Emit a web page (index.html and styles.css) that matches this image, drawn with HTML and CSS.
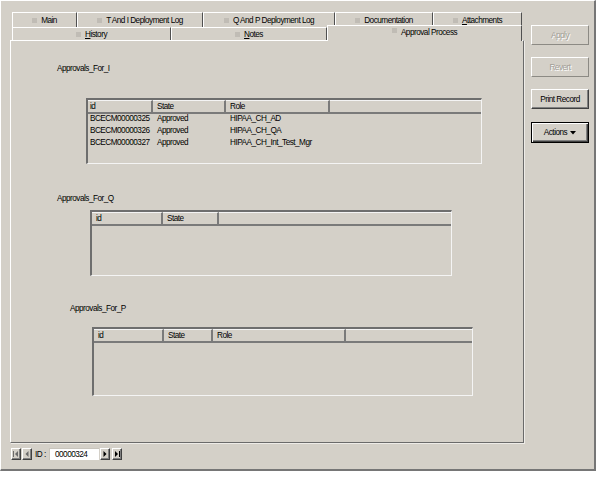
FILE: index.html
```html
<!DOCTYPE html>
<html>
<head>
<meta charset="utf-8">
<link rel="stylesheet" href="styles.css">
</head>
<body>
<div class="window">
  <div class="main">
    <div class="tabrow row1">
      <div class="tab t-main"><span class="sq"></span>Main</div>
      <div class="tab t-ti"><span class="sq"></span>T And I Deployment Log</div>
      <div class="tab t-qp"><span class="sq"></span>Q And P Deployment Log</div>
      <div class="tab t-doc"><span class="sq"></span>Documentation</div>
      <div class="tab t-att"><span class="sq"></span><span><u>A</u>ttachments</span></div>
    </div>
    <div class="tabrow row2">
      <div class="tab t-hist"><span class="sq"></span><span><u>H</u>istory</span></div>
      <div class="tab t-notes"><span class="sq"></span><span><u>N</u>otes</span></div>
      <div class="tab t-appr sel"><span class="sq"></span>Approval Process</div>
    </div>
    <div class="panel">
      <div class="label lab-i">Approvals_For_I</div>
      <div class="lv lv-i">
        <div class="lv-row lv-head">
          <div class="hc i-c1">id</div>
          <div class="hc i-c2">State</div>
          <div class="hc i-c3">Role</div>
          <div class="hc fill"></div>
        </div>
        <div class="lv-row">
          <div class="dc i-c1">BCECM00000325</div>
          <div class="dc i-c2">Approved</div>
          <div class="dc i-c3">HIPAA_CH_AD</div>
        </div>
        <div class="lv-row">
          <div class="dc i-c1">BCECM00000326</div>
          <div class="dc i-c2">Approved</div>
          <div class="dc i-c3">HIPAA_CH_QA</div>
        </div>
        <div class="lv-row">
          <div class="dc i-c1">BCECM00000327</div>
          <div class="dc i-c2">Approved</div>
          <div class="dc i-c3">HIPAA_CH_Int_Test_Mgr</div>
        </div>
      </div>

      <div class="label lab-q">Approvals_For_Q</div>
      <div class="lv lv-q">
        <div class="lv-row lv-head">
          <div class="hc q-c1">id</div>
          <div class="hc q-c2">State</div>
          <div class="hc fill"></div>
        </div>
      </div>

      <div class="label lab-p">Approvals_For_P</div>
      <div class="lv lv-p">
        <div class="lv-row lv-head">
          <div class="hc p-c1">id</div>
          <div class="hc p-c2">State</div>
          <div class="hc p-c3">Role</div>
          <div class="hc fill"></div>
        </div>
      </div>
    </div>
    <div class="nav">
      <div class="nbtn dim"><svg width="8" height="8" viewBox="0 0 8 8"><rect x="1" y="1" width="1" height="6"/><path d="M6 1 L3 4 L6 7 Z"/></svg></div>
      <div class="nbtn dim"><svg width="8" height="8" viewBox="0 0 8 8"><path d="M5.5 1 L2.5 4 L5.5 7 Z"/></svg></div>
      <div class="idlab">ID :</div>
      <div class="idbox">00000324</div>
      <div class="nbtn"><svg width="8" height="8" viewBox="0 0 8 8"><path d="M2.5 1 L5.5 4 L2.5 7 Z"/></svg></div>
      <div class="nbtn nb-last"><svg width="8" height="8" viewBox="0 0 8 8"><path d="M2 1 L5 4 L2 7 Z"/><rect x="6" y="1" width="1" height="6"/></svg></div>
    </div>
  </div>
  <div class="side">
    <div class="btn dis">Apply</div>
    <div class="btn dis">Revert</div>
    <div class="btn">Print Record</div>
    <div class="btn def">Actions <svg class="arrow" width="6" height="4" viewBox="0 0 6 4"><path d="M0 0 H6 L3 3.5 Z"/></svg></div>
  </div>
</div>
</body>
</html>
```

FILE: styles.css
```css
* { box-sizing: border-box; }

body {
  margin: 0;
  background: #ffffff;
  font-family: "Liberation Sans", Arial, sans-serif;
  font-size: 8.2px;
  letter-spacing: -0.5px;
  color: #000;
}

.window {
  width: 596px;
  height: 471px;
  background: #d4d0c8;
  border-top: 1px solid #fff;
  border-left: 1px solid #fff;
  border-right: 2px solid #767676;
  border-bottom: 2px solid #767676;
  display: flex;
  align-items: flex-start;
}

.main {
  width: 514px;
  margin: 11px 0 0 9px;
  display: flex;
  flex-direction: column;
}

.tabrow {
  display: flex;
  margin-left: 2px;
  width: 510px;
}

.tab {
  display: flex;
  align-items: center;
  justify-content: center;
  gap: 4px;
  background: #d4d0c8;
  border-top: 1px solid #fff;
  border-left: 1px solid #fff;
  border-right: 1px solid #505050;
  white-space: nowrap;
}

.tab .sq {
  width: 5px;
  height: 5px;
  background: #c0bcb5;
}

.tab u { text-decoration: underline; }

.row1 .tab { height: 15px; }
.row2 .tab { height: 13px; }

.t-main { width: 65px; }
.t-ti { width: 126px; }
.t-qp { width: 132px; }
.t-doc { width: 98px; }
.t-att { width: 89px; }
.t-hist { width: 159px; }
.t-notes { width: 156px; }
.t-appr { width: 195px; }

.row2 .tab.sel {
  height: 16px;
  margin-top: -2px;
  margin-bottom: -1px;
  position: relative;
  z-index: 2;
  align-items: flex-start;
  padding-top: 2px;
}

.panel {
  height: 403px;
  border-top: 1px solid #fff;
  border-left: 1px solid #fff;
  border-right: 1px solid #6a6a6a;
  border-bottom: 1px solid #6a6a6a;
  box-shadow: 1px 1px 0 #eeece8;
  display: flex;
  flex-direction: column;
  align-items: flex-start;
}

.label {
  height: 10px;
  line-height: 10px;
  white-space: nowrap;
}

.lab-i { margin: 23px 0 0 46px; }
.lab-q { margin: 30px 0 0 46px; }
.lab-p { margin: 28px 0 0 59px; }

.lv {
  border-top: 2px solid #6e6e6e;
  border-left: 2px solid #6e6e6e;
  border-right: 1px solid #f4f4f4;
  border-bottom: 1px solid #f4f4f4;
  background: #d4d0c8;
}

.lv-i { width: 396px; height: 66px; margin: 24px 0 0 75px; }
.lv-q { width: 362px; height: 66px; margin: 6px 0 0 79px; }
.lv-p { width: 381px; height: 69px; margin: 13px 0 0 81px; }

.lv-row {
  display: flex;
  height: 12px;
  line-height: 12px;
}

.lv-head {
  height: 14px;
  line-height: 12px;
  margin-bottom: -1px;
}

.hc {
  height: 14px;
  padding-left: 4px;
  border-top: 1px solid #f4f4f4;
  border-right: 2px solid #7a7a7a;
  border-bottom: 2px solid #7a7a7a;
  white-space: nowrap;
}

.hc.fill {
  flex: 1;
  border-right: none;
}

.dc {
  padding-left: 4px;
  white-space: nowrap;
}

.lv-row .i-c1 { width: 65px; padding-left: 2px; }
.i-c2 { width: 73px; }
.i-c3 { width: 104px; }

.q-c1 { width: 71px; }
.q-c2 { width: 56px; }

.p-c1 { width: 70px; }
.p-c2 { width: 49px; }
.p-c3 { width: 133px; }

.nav {
  display: flex;
  align-items: center;
  height: 12px;
  margin: 5px 0 0 1px;
}

.nbtn {
  width: 10px;
  height: 12px;
  margin-right: 1px;
  border-top: 1px solid #fff;
  border-left: 1px solid #fff;
  border-right: 1px solid #404040;
  border-bottom: 1px solid #404040;
  box-shadow: inset -1px -1px 0 #808080;
  display: flex;
  align-items: center;
  justify-content: center;
  fill: #000;
}

.nbtn.dim { fill: #6a6a6a; }
.nbtn.nb-last { margin-left: 1px; }

.idlab {
  margin-left: 2px;
  width: 14px;
  white-space: nowrap;
}

.idbox {
  width: 50px;
  height: 12px;
  line-height: 12px;
  background: #fff;
  padding-left: 5px;
  border-top: 1px solid #c8c4bc;
  border-left: 1px solid #c8c4bc;
  margin-right: 1px;
}

.side {
  margin: 24px 0 0 7px;
  display: flex;
  flex-direction: column;
  gap: 12px;
}

.btn {
  width: 58px;
  height: 20px;
  display: flex;
  align-items: center;
  justify-content: center;
  border: 1px solid;
  border-color: #fff #404040 #404040 #fff;
  box-shadow: inset -1px -1px 0 #808080;
  white-space: nowrap;
}

.btn.dis {
  color: #a29e96;
  text-shadow: 1px 1px 0 #fff;
  border-color: #fff #8c8a84 #8c8a84 #fff;
  box-shadow: none;
}

.btn.def {
  height: 21px;
  margin-top: 1px;
  border: 1px solid #000;
  box-shadow: inset 1px 1px 0 #fff, inset -1px -1px 0 #404040, inset -2px -2px 0 #808080;
}

.arrow {
  margin-left: 3px;
  fill: #000;
}
```
